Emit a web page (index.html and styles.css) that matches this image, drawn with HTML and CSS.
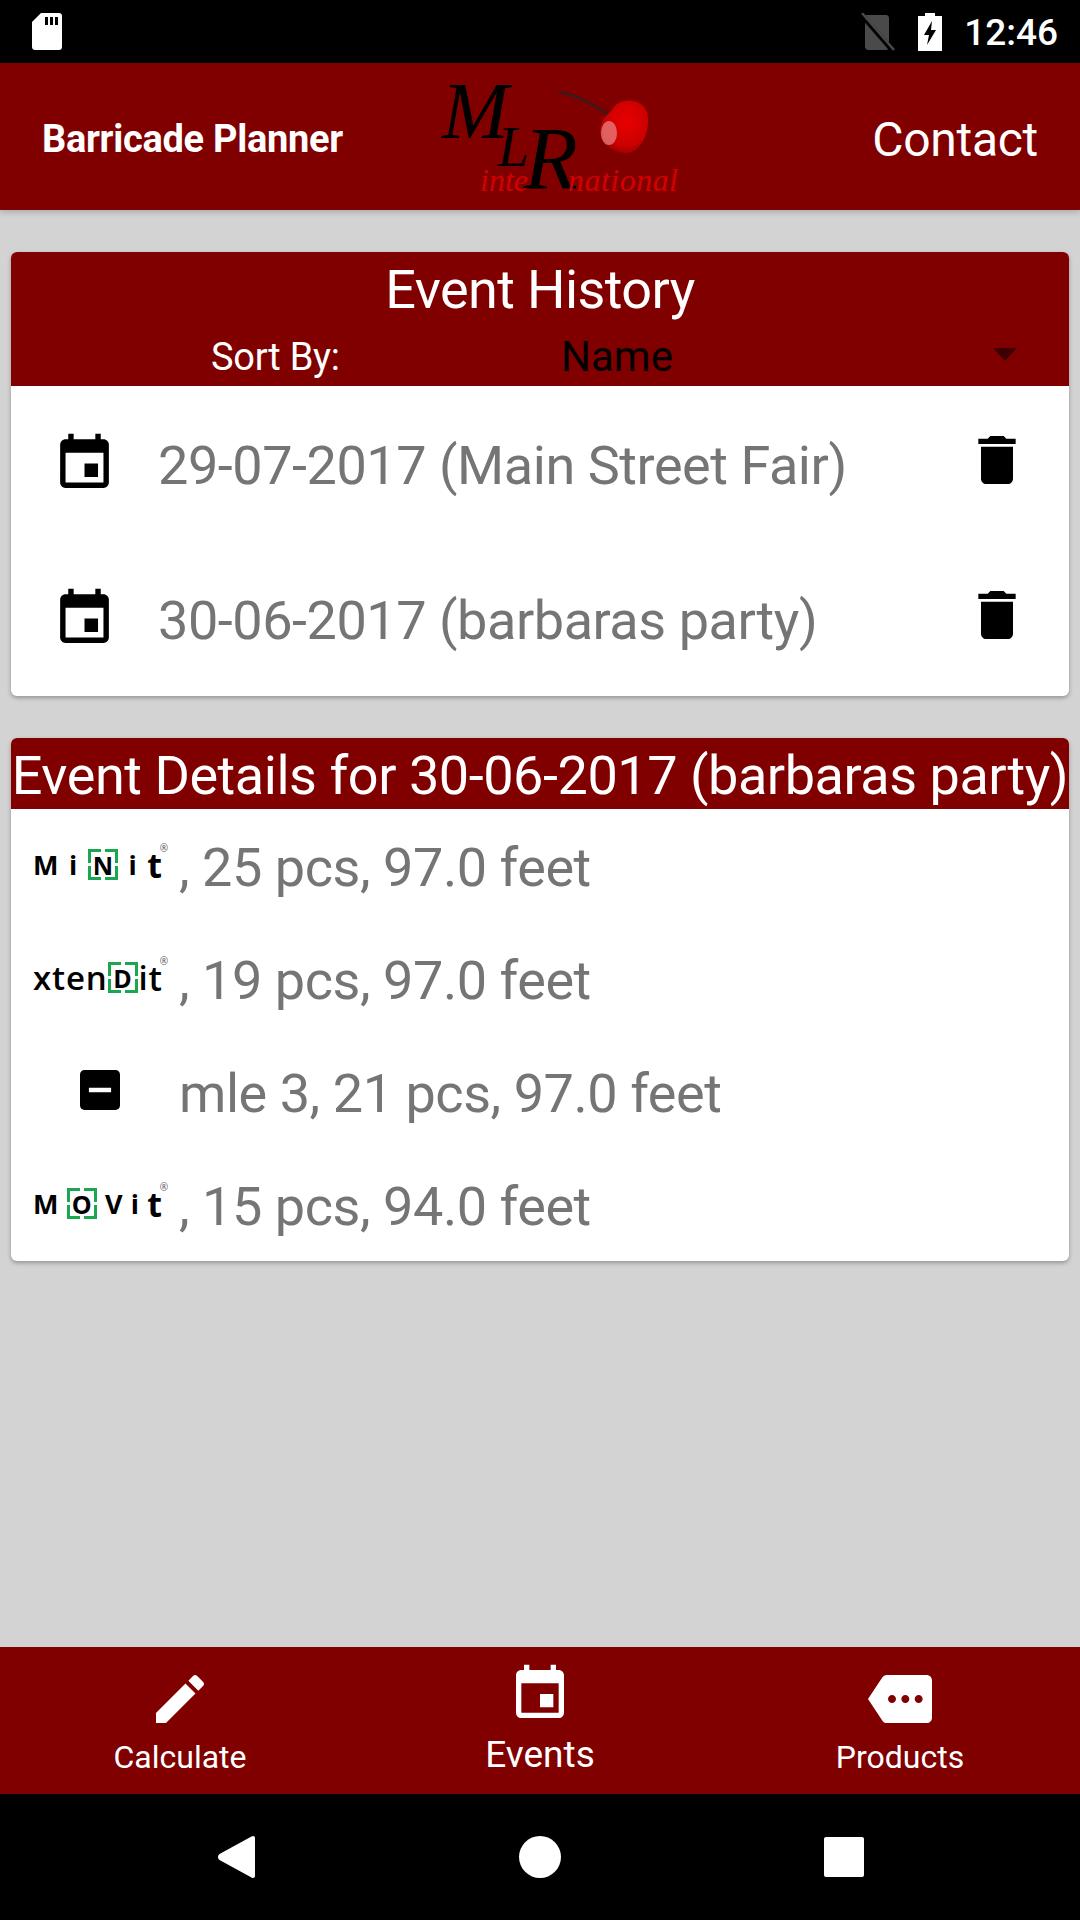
FILE: index.html
```html
<!DOCTYPE html>
<html>
<head>
    <title>Barricade Planner</title>
    <link rel="stylesheet" href="styles.css">
</head>
<body>
<div class="status-bar">
    <svg class="sd-icon" viewBox="0 0 30 37"><path fill="#fff" d="M9 0h18c1.7 0 3 1.3 3 3v31c0 1.700-1.300 3-3 3H3c-1.700 0-3-1.300-3-3V9z"/><path fill="#000" d="M13 4h3v8h-3zM18 4h3v8h-3zM23 4h3v8h-3z"/></svg>
    <div class="status-right">
        <svg class="sim-icon" viewBox="0 0 34 38"><path fill="#4a4a4a" d="M5 2h20c1.500 0 3 1.300 3 3v29c0 1.500-1.500 3-3 3H7c-1.500 0-3-1.500-3-3V3z"/><path stroke="#000" stroke-width="5" d="M-2 -1L32 38"/><path stroke="#4a4a4a" stroke-width="2.500" d="M1 0L33 37"/></svg>
        <svg class="battery-icon" viewBox="0 0 24 38"><path fill="#fff" d="M7 0h10v3h7v35H0V3h7z"/><path fill="#000" d="M14 8L6 22h5l-2 10 9-15h-5z"/></svg>
        <span class="clock">12:46</span>
    </div>
</div>

<header class="toolbar">
    <div class="app-title">Barricade Planner</div>
    <svg class="brand" viewBox="0 0 240 114">
        <defs>
            <radialGradient id="cherry" cx="0.55" cy="0.4" r="0.65">
                <stop offset="0" stop-color="#e80000"/>
                <stop offset="0.7" stop-color="#cc0000"/>
                <stop offset="1" stop-color="#990000"/>
            </radialGradient>
        </defs>
        <text class="brand-script" x="2" y="58" font-size="80">M</text>
        <text class="brand-script" x="58" y="86" font-size="56">L</text>
        <text class="brand-script" x="84" y="108" font-size="88">R</text>
        <text class="brand-sub" x="40" y="111" font-size="32">inte</text>
        <text class="brand-sub" x="128" y="111" font-size="32" textLength="110">national</text>
        <path d="M119 12C135 15 150 22 169 35" fill="none" stroke="#3a1a1a" stroke-width="2.500"/>
        <path d="M172 30C178 18 200 16 207 32C212 50 200 74 186 73C172 72 160 64 160 52C160 42 166 36 172 30Z" fill="url(#cherry)"/>
        <ellipse cx="169" cy="53" rx="8" ry="12" fill="#e88080" opacity="0.75"/>
    </svg>
    <div class="contact">Contact</div>
</header>

<main class="content">
    <section class="card">
        <div class="card-head history-head">
            <div class="history-title">Event History</div>
            <div class="sort-row">
                <span class="sort-label">Sort By:</span>
                <span class="sort-value">Name</span>
                <span class="sort-arrow"></span>
            </div>
        </div>
        <div class="history-row">
            <svg class="row-icon" viewBox="0 0 24 24"><path d="M17 12h-5v5h5v-5zM16 1v2H8V1H6v2H5c-1.110 0-1.990.9-1.990 2L3 19c0 1.100.89 2 2 2h14c1.100 0 2-.9 2-2V5c0-1.100-.9-2-2-2h-1V1h-2zm3 18H5V8h14v11z"/></svg>
            <span class="row-text">29-07-2017 (Main Street Fair)</span>
            <svg class="row-trash" viewBox="0 0 24 24"><path d="M6 19c0 1.100.9 2 2 2h8c1.100 0 2-.9 2-2V7H6v12zM19 4h-3.500l-1-1h-5l-1 1H5v2h14V4z"/></svg>
        </div>
        <div class="history-row">
            <svg class="row-icon" viewBox="0 0 24 24"><path d="M17 12h-5v5h5v-5zM16 1v2H8V1H6v2H5c-1.110 0-1.990.9-1.990 2L3 19c0 1.100.89 2 2 2h14c1.100 0 2-.9 2-2V5c0-1.100-.9-2-2-2h-1V1h-2zm3 18H5V8h14v11z"/></svg>
            <span class="row-text">30-06-2017 (barbaras party)</span>
            <svg class="row-trash" viewBox="0 0 24 24"><path d="M6 19c0 1.100.9 2 2 2h8c1.100 0 2-.9 2-2V7H6v12zM19 4h-3.500l-1-1h-5l-1 1H5v2h14V4z"/></svg>
        </div>
    </section>

    <section class="card">
        <div class="card-head details-head">Event Details for 30-06-2017 (barbaras party)</div>
        <div class="detail-row">
            <div class="mark mark-wide">
                <span>M</span><span>i</span><span class="mark-box">N</span><span>i</span><span class="mark-t">t</span>
                <span class="mark-reg">®</span>
            </div>
            <span class="row-text">, 25 pcs, 97.0 feet</span>
        </div>
        <div class="detail-row">
            <div class="mark">
                <span>x</span><span>t</span><span>e</span><span>n</span><span class="mark-box">D</span><span>i</span><span class="mark-t">t</span>
                <span class="mark-reg">®</span>
            </div>
            <span class="row-text">, 19 pcs, 97.0 feet</span>
        </div>
        <div class="detail-row">
            <div class="mark mark-icon">
                <svg class="minus-icon" viewBox="3 3 18 18"><path d="M19 3H5c-1.100 0-2 .9-2 2v14c0 1.100.9 2 2 2h14c1.100 0 2-.9 2-2V5c0-1.100-.9-2-2-2zm-2 10H7v-2h10v2z"/></svg>
            </div>
            <span class="row-text">mle 3, 21 pcs, 97.0 feet</span>
        </div>
        <div class="detail-row">
            <div class="mark mark-wide">
                <span>M</span><span class="mark-box">O</span><span>V</span><span>i</span><span class="mark-t">t</span>
                <span class="mark-reg">®</span>
            </div>
            <span class="row-text">, 15 pcs, 94.0 feet</span>
        </div>
    </section>
</main>

<nav class="tabs">
    <div class="tab">
        <svg class="tab-icon" viewBox="0 0 24 24"><path d="M3 17.250V21h3.750L17.810 9.940l-3.750-3.750L3 17.250zM20.710 7.040c.39-.39.39-1.020 0-1.410l-2.340-2.340c-.39-.39-1.020-.39-1.410 0l-1.830 1.830 3.750 3.750 1.830-1.830z"/></svg>
        <span class="tab-label">Calculate</span>
    </div>
    <div class="tab tab-active">
        <svg class="tab-icon" viewBox="0 0 24 24"><path d="M17 12h-5v5h5v-5zM16 1v2H8V1H6v2H5c-1.110 0-1.990.9-1.990 2L3 19c0 1.100.89 2 2 2h14c1.100 0 2-.9 2-2V5c0-1.100-.9-2-2-2h-1V1h-2zm3 18H5V8h14v11z"/></svg>
        <span class="tab-label">Events</span>
    </div>
    <div class="tab">
        <svg class="tab-icon" viewBox="0 0 24 24"><path d="M22 3H7c-.69 0-1.230.35-1.590.88L0 12l5.410 8.110c.36.53.9.89 1.590.89h15c1.100 0 2-.9 2-2V5c0-1.100-.9-2-2-2zM9 13.500c-.83 0-1.500-.67-1.500-1.500s.67-1.500 1.500-1.500 1.500.67 1.500 1.500-.67 1.500-1.500 1.500zm5 0c-.83 0-1.500-.67-1.500-1.500s.67-1.500 1.500-1.500 1.500.67 1.500 1.500-.67 1.500-1.500 1.500zm5 0c-.83 0-1.500-.67-1.500-1.500s.67-1.500 1.500-1.500 1.500.67 1.500 1.500-.67 1.500-1.500 1.500z"/></svg>
        <span class="tab-label">Products</span>
    </div>
</nav>

<div class="nav-bar">
    <svg class="nav-back" viewBox="0 0 37 42"><path fill="#fff" d="M35 0c1.200 0 2 .8 2 2v38c0 1.200-.8 2-2 2-.6 0-1-.2-1.500-.6L1.500 24C-.5 22.500-.5 19.500 1.500 18l32-17.400C34 .2 34.400 0 35 0z"/></svg>
    <div class="nav-home"></div>
    <div class="nav-recent"></div>
</div>
</body>
</html>
```

FILE: styles.css
```css
* {
    box-sizing: border-box;
}

html, body {
    margin: 0;
    width: 1080px;
    height: 1920px;
    overflow: hidden;
}

body {
    display: flex;
    flex-direction: column;
    background-color: #d3d3d3;
    font-family: Roboto, sans-serif;
}

.status-bar {
    display: flex;
    flex: none;
    align-items: center;
    justify-content: space-between;
    height: 63px;
    padding: 0 22px 0 32px;
    background-color: #000;
}

.sd-icon {
    width: 30px;
    height: 37px;
}

.status-right {
    display: flex;
    align-items: center;
}

.sim-icon {
    width: 34px;
    height: 38px;
}

.battery-icon {
    width: 24px;
    height: 38px;
    margin-left: 23px;
}

.clock {
    margin-left: 22px;
    margin-top: 2px;
    color: #fff;
    font-size: 37px;
    font-weight: 500;
}

.toolbar {
    display: flex;
    flex: none;
    align-items: center;
    height: 147px;
    padding: 0 42px 0 42px;
    background-color: #800000;
    color: #fff;
    box-shadow: 0 2px 6px rgba(0, 0, 0, 0.2);
    position: relative;
}

.app-title {
    width: 398px;
    margin-top: 5px;
    font-size: 38px;
    font-weight: 700;
    letter-spacing: -0.3px;
}

.brand {
    width: 240px;
    height: 114px;
    overflow: visible;
}

.brand-script {
    font-family: "Liberation Serif", serif;
    font-style: italic;
    fill: #000;
}

.brand-sub {
    font-family: "Liberation Serif", serif;
    font-style: italic;
    fill: #d40000;
}

.contact {
    margin-left: auto;
    margin-top: 5px;
    font-size: 48px;
    letter-spacing: -0.3px;
}

.content {
    flex: 1;
    padding: 42px 11px 0;
}

.card {
    margin-bottom: 42px;
    border-radius: 6px;
    background-color: #fff;
    box-shadow: 0 2px 4px rgba(0, 0, 0, 0.3);
    overflow: hidden;
}

.card-head {
    background-color: #800000;
    color: #fff;
}

.history-head {
    height: 134px;
}

.history-title {
    padding-top: 6px;
    font-size: 54px;
    line-height: 64px;
    letter-spacing: -0.6px;
    text-align: center;
}

.sort-row {
    display: flex;
    align-items: center;
    height: 54px;
    padding-top: 16px;
}

.sort-label {
    margin-left: 200px;
    width: 350px;
    font-size: 38px;
    letter-spacing: -0.25px;
}

.sort-value {
    width: 432px;
    margin-top: -2px;
    color: #000;
    font-size: 42px;
}

.sort-arrow {
    width: 0;
    height: 0;
    margin-top: -5px;
    border-left: 12px solid transparent;
    border-right: 12px solid transparent;
    border-top: 13px solid #3c0000;
}

.details-head {
    height: 71px;
    padding-top: 2px;
    font-size: 54px;
    line-height: 71px;
    letter-spacing: -0.45px;
    text-align: center;
    white-space: nowrap;
}

.history-row {
    display: flex;
    align-items: center;
    height: 155px;
    padding: 0 40px 0 41px;
}

.row-icon {
    width: 65px;
    height: 65px;
    margin-right: 41px;
}

.row-trash {
    width: 64px;
    height: 64px;
    margin-left: auto;
    margin-top: -8px;
}

.row-text {
    margin-top: 3px;
    color: #757575;
    font-size: 54px;
    letter-spacing: -0.45px;
    white-space: nowrap;
}

.detail-row {
    display: flex;
    align-items: center;
    height: 113px;
    padding-left: 22px;
}

.detail-row .row-text {
    margin-top: 3px;
}

.mark {
    display: flex;
    flex: none;
    align-items: center;
    justify-content: space-between;
    position: relative;
    width: 135px;
    height: 40px;
    margin-right: 11px;
    padding-right: 3px;
    margin-top: -2px;
    color: #000;
    font-family: "Open Sans", sans-serif;
    font-size: 33px;
    font-weight: 600;
}

.mark-wide {
    font-size: 27px;
    font-weight: 700;
}

.mark-box {
    display: flex;
    align-items: center;
    justify-content: center;
    position: relative;
    isolation: isolate;
    width: 30px;
    height: 31px;
    border: 3px solid #1ba650;
    font-size: 25px;
    font-weight: 700;
}

/* gaps in the green frame, under the letter */
.mark-box::before {
    content: "";
    position: absolute;
    z-index: -1;
    top: -3px;
    bottom: -3px;
    left: 10px;
    width: 4px;
    background-color: #fff;
}

.mark-box::after {
    content: "";
    position: absolute;
    z-index: -1;
    left: -3px;
    right: -3px;
    top: 11px;
    height: 3px;
    background-color: #fff;
}

.mark-t {
    margin-right: 3px;
    font-size: 34px;
    line-height: 34px;
}

.mark-reg {
    position: absolute;
    top: -4px;
    right: 0;
    color: #555;
    font-size: 10px;
    font-weight: 400;
}

.mark-icon {
    justify-content: center;
    margin-top: -4px;
    padding-right: 2px;
}

.minus-icon {
    width: 40px;
    height: 40px;
}

.tabs {
    display: flex;
    flex: none;
    height: 147px;
    background-color: #800000;
    color: #fff;
}

.tab {
    display: flex;
    flex: 1;
    flex-direction: column;
    align-items: center;
    padding-top: 20px;
}

.tab-icon {
    width: 64px;
    height: 64px;
    fill: #fff;
}

.tab-label {
    margin-top: 7px;
    font-size: 32px;
}

.tab-active .tab-icon {
    margin-top: -5px;
}

.tab-active .tab-label {
    margin-top: 7px;
    font-size: 37px;
}

.nav-bar {
    display: flex;
    flex: none;
    align-items: center;
    height: 126px;
    padding-left: 218px;
    background-color: #000;
}

.nav-back {
    width: 37px;
    height: 42px;
}

.nav-home {
    width: 42px;
    height: 42px;
    margin-left: 264px;
    border-radius: 50%;
    background-color: #fff;
}

.nav-recent {
    width: 40px;
    height: 40px;
    margin-left: 263px;
    border-radius: 2px;
    background-color: #fff;
}
```
